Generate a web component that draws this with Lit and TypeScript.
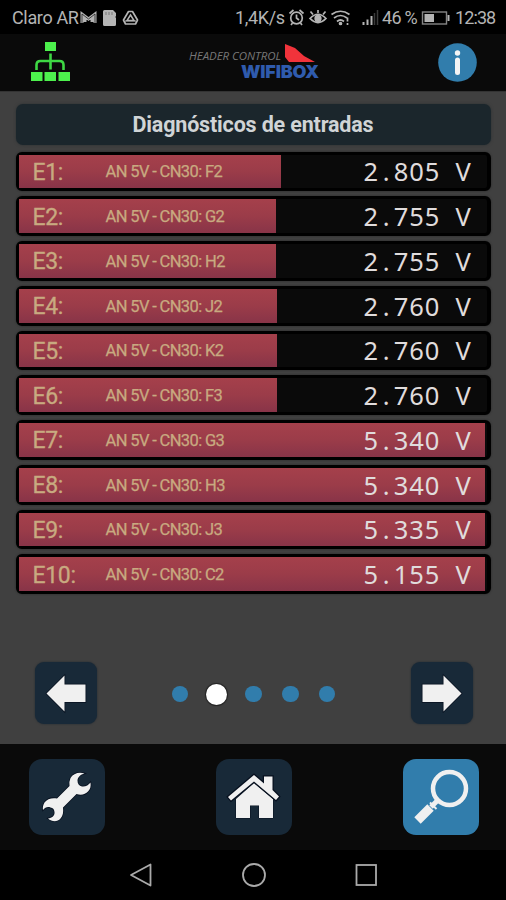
import { LitElement, html, svg, css } from "lit";
import { customElement, property } from "lit/decorators.js";

const iconStyles = css`
  svg { display: block; overflow: visible; flex: none; }
`;

@customElement("status-bar")
class StatusBar extends LitElement {
  static styles = [iconStyles, css`
    :host { display: flex; height: 34px; background: #000; color: #b4b4b4; align-items: center;
      font: 18px/34px Roboto, sans-serif; padding: 2px 10px 0 12px; box-sizing: border-box; white-space: pre; }
    .carrier { width: 67px; letter-spacing: -0.35px; }
    .left { display: flex; align-items: center; flex: 1; }
    .speed { width: 53px; letter-spacing: -0.35px; }
    .percent { width: 41px; letter-spacing: -0.7px; }
    .clock { width: 41px; letter-spacing: -0.9px; }
  `];
  render() {
    return html`
      <div class="left"><span class="carrier">Claro AR</span>
        <svg width="60" height="20" viewBox="79 8 60 20" fill="none" stroke="#b4b4b4">
          <path d="M82 23V14l6.500 5 6.500-5v9M85 22v-6M92 22v-6" stroke-width="3"/>
          <path d="M82 23V14l6.500 5 6.500-5v9" stroke="#222" stroke-width=".8"/>
          <path d="M103 11.500q0-1.500 1.500-1.500h8.500l3 3v3l-.7 1 .7 1v6.500q0 1.500-1.500 1.500H104.500q-1.500 0-1.500-1.500Z" fill="#b4b4b4" stroke="none"/>
          <path d="M106 12v3M109 12v3M112 12v3" stroke="#777"/>
          <path d="M128.500 11.500h4l5 8.500-2 4h-10l-2-4Z" stroke-width="1.700" stroke-linejoin="round"/>
          <path d="m130.500 15 3.500 5.500h-7Z" stroke-width="1.500"/><path d="M125 21h11" stroke-width="1"/>
        </svg>
      </div>
      <span class="speed">1,4K/s</span>
      <svg width="94" height="20" viewBox="288 8 94 20" fill="none" stroke="#b4b4b4" stroke-width="1.700">
        <circle cx="296.500" cy="18" r="5.800"/><path d="M296.500 14.500V18l2.500 2M289.500 13.500l4-3.500M303.500 13.500l-4-3.500M292.500 23l-1.500 2M300.500 23l1.500 2"/>
        <path d="M310 18.500q8-8.500 16 0-8 8-16 0Z"/><circle cx="318" cy="18.500" r="2.800" fill="#b4b4b4"/><path d="M318 13v-3M313 14.500l-2.500-3M323 14.500l2.500-3"/>
        <path d="M331.500 14.500q9-6.500 18 0M334 18q6.500-5 13 0M337 21.500q3.500-3 7 0"/><circle cx="340.500" cy="23.500" r="1" fill="#b4b4b4"/><path d="M347.500 17.500v4M347.500 23v2"/>
        <path d="M363.500 25v-3M367.500 25v-5.500M371.500 25v-9" stroke-width="2"/><path d="M374.500 25V13M377.500 25V10" stroke="#3a3a3a" stroke-width="1.500"/>
      </svg>
      <span class="percent">46 %</span>
      <svg width="32" height="14" viewBox="0 0 32 14"><rect x="-.5" y="1" width="24" height="12" fill="none" stroke="#858585" stroke-width="1.400"/><path d="M1.500 3H11v8H1.500Z" fill="#b4b4b4"/><path d="M25.500 4v6" stroke="#b4b4b4" stroke-width="2"/></svg>
      <span class="clock">12:38</span>`;
  }
}

@customElement("app-header")
class AppHeader extends LitElement {
  static styles = [iconStyles, css`
    :host { display: flex; height: 57px; box-sizing: border-box; background: #0a0a0a;
      align-items: center; justify-content: space-between; padding: 0 29.5px 1px 29.500px; }
    .brand { display: grid; grid-template-columns: 95px 35px; margin-left: 1px; height: 38px; grid-template-rows: 20px 20px; }
    .name { font: italic 11.500px/25px "Open Sans", sans-serif; color: #777; white-space: nowrap; letter-spacing: -0.05px; }
    .product { grid-column: 1 / 3; font: 900 18px/18px Inter, sans-serif; color: #2f5bad; text-align: right; letter-spacing: -0.2px; }
  `];
  render() {
    return html`
      <svg width="40" height="42" viewBox="0 1 40 42"><path d="M15 2h11v9H15ZM1 32h11.500v9H1ZM14.500 32H26v9H14.500ZM28.500 32H40v9H28.500Z" fill="#4df14d"/><path d="M20.500 13.500v16M6.500 30v-5q0-4 4-4h19q4 0 4 4v5" fill="none" stroke="#3ed844" stroke-width="2.600"/></svg>
      <div class="brand"><span class="name">HEADER CONTROL</span>
        <svg width="35" height="20" viewBox="0 0 35 20"><path d="m1 1 10 4 9 8 11 6H5L1 14Z" fill="#f1333b"/></svg>
        <span class="product">WIFIBOX</span></div>
      <svg width="39" height="39" viewBox="0 0 39 39"><circle cx="19.500" cy="19.500" r="19.300" fill="#317dac"/><circle cx="19.500" cy="10" r="2.700" fill="#f4f4f4"/><path d="M19.500 17v12.500" stroke="#f4f4f4" stroke-width="5" stroke-linecap="round"/></svg>`;
  }
}

@customElement("input-row")
class InputRow extends LitElement {
  @property() label = "";
  @property() source = "";
  @property() volts = "";
  @property({ type: Number }) fill = 0;
  static styles = css`
    :host { display: grid; height: 39.75px; box-sizing: border-box; border: 3.5px solid #000; border-bottom-width: 3px; border-right-width: 4.5px;
      border-radius: 6px; background: #0a0a0a; box-shadow: 0 0 2px #222; grid-template: 100% / 100%; font-family: Roboto, sans-serif; }
    .bar, .line { grid-area: 1 / 1; }
    .bar { background: linear-gradient(#a5404b, #9b3c49 50%, #883448); }
    .line { display: grid; grid-template-columns: 73px 1fr 108px; align-items: center; padding: 0 15.5px 0 13.5px; color: #c8aa80; }
    .label { font-size: 23px; letter-spacing: -0.35px; padding-top: 2px; -webkit-text-stroke: .3px; }
    .source { font-size: 16.500px; letter-spacing: -0.63px; white-space: nowrap; padding-top: 1px; -webkit-text-stroke: .25px; }
    .value { display: grid; grid-template-columns: repeat(7, 15.43px); text-align: center; color: #e0dcdc;
      font: 25.500px/30px "Noto Sans", sans-serif; }
    .digits { letter-spacing: 0.84px; grid-column: span 3; text-align: left; }
    .unit { grid-column: 7; }
  `;
  render() {
    const [whole, decimals] = this.volts.split(".");
    return html`<div class="bar" style="width:${this.fill}px"></div>
      <div class="line"><span class="label">${this.label}:</span><span class="source">AN 5V - CN30: ${this.source}</span>
        <span class="value"><span>${whole}</span><span>.</span><span class="digits">${decimals}</span><span class="unit">V</span></span></div>`;
  }
}

const inputs: [string, string, string, number][] = [
  ["E1", "F2", "2.805", 262], ["E2", "G2", "2.755", 257], ["E3", "H2", "2.755", 257],
  ["E4", "J2", "2.760", 258], ["E5", "K2", "2.760", 258], ["E6", "F3", "2.760", 258],
  ["E7", "G3", "5.340", 466], ["E8", "H3", "5.340", 466], ["E9", "J3", "5.335", 466], ["E10", "C2", "5.155", 466],
];

const arrow = svg`<path d="M11.500 31.500 29.500 13.500v9h21v17.500h-21v9.500Z" fill="#f0f0f0" stroke="#07101f" stroke-width="1.500" paint-order="stroke"/>`;

@customElement("app-root")
class AppRoot extends LitElement {
  static styles = [iconStyles, css`
    :host { display: flex; flex-direction: column; height: 900px; width: 506px; overflow: hidden; background: #000; }
    main { height: 653px; box-sizing: border-box; background: #404040; padding: 11.5px 15.5px 0; display: flex; flex-direction: column; border-top: 1px solid #333; }
    h1 { margin: 0 0 7px; height: 41px; border-radius: 7px; background: #1b262c; color: #d0d4d6; text-align: center;
      font: 700 21.500px/42px Roboto, sans-serif; box-shadow: 0 0 3px #2b3032; letter-spacing: -0.17px; }
    .rows { display: flex; flex-direction: column; gap: 5px; padding-left: .5px; }
    .pager { display: flex; justify-content: space-between; align-items: center; padding: 0 18px 0 19px; margin-top: 67.5px; }
    .step { width: 62px; height: 62px; border-radius: 9px; background: #182938; box-shadow: 0 0 2px #1d2730; }
    .flip { transform: scaleX(-1); }
    .dots { display: flex; align-items: center; gap: 20px; padding-top: 3px; }
    .dot { width: 16.700px; height: 16.700px; border-radius: 50%; background: #317dac; }
    .on { width: 21px; height: 21px; background: #fff; box-shadow: 0 0 1px 1px #222; margin: 0 -2px; }
    nav { height: 106px; box-sizing: border-box; background: #0a0a0a; padding: 15px 27px 0 28.5px; display: flex; justify-content: space-between; }
    .tab { width: 76px; height: 76px; border-radius: 13px; background: #182938; }
    .active { background: #317dac; }
    footer { height: 50px; display: flex; justify-content: center; align-items: center; gap: 88.500px; padding-left: 1px; }
  `];
  render() {
    return html`
      <status-bar></status-bar><app-header></app-header>
      <main>
        <h1>Diagnósticos de entradas</h1>
        <div class="rows">${inputs.map(([l, s, v, f]) => html`<input-row label=${l} source=${s} volts=${v} fill=${f}></input-row>`)}</div>
        <div class="pager">
          <div class="step"><svg width="62" height="62">${arrow}</svg></div>
          <div class="dots">${[0, 1, 2, 3, 4].map((i) => html`<span class="dot ${i === 1 ? "on" : ""}"></span>`)}</div>
          <div class="step flip"><svg width="62" height="62">${arrow}</svg></div>
        </div>
      </main>
      <nav>
        <div class="tab"><svg width="76" height="76" viewBox="0 0 76 76"><path d="M55.500 14.500C50 12.500 44 14.500 41.500 19q-1.500 3-1 8L28 39.500c-5-1-10 .5-12.500 4-1.500 2.500-2 5-1.500 7.500 2-2.500 4.500-3.500 7.500-2.500 2.500.5 3.500 1.500 4 4.500.5 3.500-2.500 6-6.500 6.500 4 3.500 9.500 3.500 12.500 0 2.500-2.500 3-6.500 2.500-11L47.500 35c4.500 1.500 9 .5 11.500-2.500 2.500-2.500 3-5.500 2.500-9-2 2.500-5 4.500-8.500 4-3-.5-4.500-3-4.500-6 0-3 3-6 7-7Z" fill="#f0f0f0" stroke="#07101f" stroke-width="1.500" paint-order="stroke"/></svg></div>
        <div class="tab"><svg width="76" height="76" viewBox="0 0 76 76"><path d="M20 40 38 24l19 16v19H43V46.500h-9V59H20Z" fill="#f0f0f0" stroke="#07101f" paint-order="stroke"/><path d="m12 38 26-22 10 8.500v-7h8.500V31l6.500 6.500-3 3.500L38 22.500 15 41.500Z" fill="#f0f0f0" stroke="#07101f" stroke-width="2.500" paint-order="stroke"/></svg></div>
        <div class="tab active"><svg width="76" height="76" viewBox="0 0 76 76" fill="none" stroke="#f0f0f0"><circle cx="46.500" cy="29.500" r="16.500" stroke-width="4.500"/><path d="m34.500 41.500-6.500 6.500" stroke-width="5"/><path d="m27 43.500 6.500 6.500" stroke-width="2"/><path d="M27.500 48.500 14.500 61.500" stroke-width="9"/></svg></div>
      </nav>
      <footer>
        <svg width="24" height="24" viewBox="0 0 24 24" fill="none" stroke="#aaa" stroke-width="1.800"><path d="M21.500 1.500v21L2 12Z" stroke-linejoin="round"/></svg>
        <svg width="24" height="24" viewBox="0 0 24 24" fill="none" stroke="#aaa" stroke-width="1.800"><circle cx="12" cy="12" r="11"/></svg>
        <svg width="24" height="24" viewBox="0 0 24 24" fill="none" stroke="#aaa" stroke-width="1.800"><rect x="2.500" y="2" width="19.500" height="20"/></svg>
      </footer>`;
  }
}
